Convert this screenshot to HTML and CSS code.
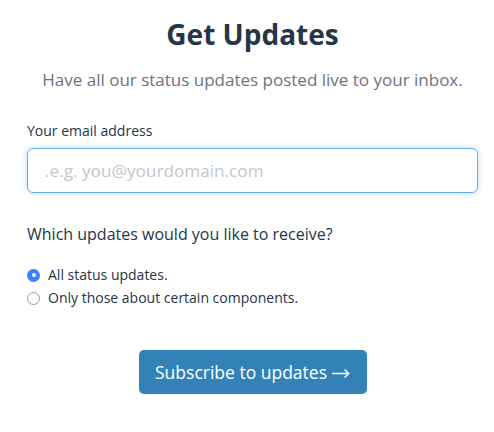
FILE: index.html
```html
<!DOCTYPE html>
<html>
<head>
<meta charset="utf-8">
<link rel="stylesheet" href="styles.css">
</head>
<body>
<div class="wrap">
  <h1 class="title">Get Updates</h1>
  <p class="sub">Have all our status updates posted live to your inbox.</p>
  <label class="label" for="email">Your email address</label>
  <div class="input"><span class="ph">.e.g. you@yourdomain.com</span></div>
  <p class="question">Which updates would you like to receive?</p>
  <div class="opts">
    <div class="opt"><span class="radio on"></span><span>All status updates.</span></div>
    <div class="opt"><span class="radio"></span><span>Only those about certain components.</span></div>
  </div>
  <div class="actions"><button class="btn"><span>Subscribe to updates</span><svg class="arrow" width="18" height="10" viewBox="0 0 18 10"><path d="M0 5.5H16.5M12.5 1.5L16.8 5.5L12.5 9.5" fill="none" stroke="#fff" stroke-width="1.4"/></svg></button></div>
</div>
</body>
</html>
```
FILE: styles.css
```css
* { box-sizing: border-box; }
html, body { margin: 0; background: #fff; }
body { font-family: "Open Sans", sans-serif; color: #293d50; }
.wrap { width: 451px; margin-left: 27px; padding-top: 14px; }
.title { margin: 0; text-align: center; font-size: 28px; font-weight: 700; line-height: 40px; color: #253647; }
.sub { margin: 13px 0 0; text-align: center; font-size: 17px; line-height: 26px; color: #6d747b; font-weight: 400; }
.label { display: block; margin-top: 28px; font-size: 14px; line-height: 20px; color: #253647; }
.input { margin-top: 7px; height: 45px; border: 1px solid #68aeea; border-radius: 6px; box-shadow: 0 0 6px rgba(102,175,233,0.45); display: flex; align-items: center; padding-left: 17px; }
.ph { font-size: 17.2px; color: #c4c7ca; }
.question { margin: 29px 0 0; font-size: 16px; line-height: 24px; color: #253647; }
.opts { margin-top: 19px; display: flex; flex-direction: column; gap: 3px; }
.opt { display: flex; align-items: center; gap: 8px; font-size: 14px; line-height: 20px; color: #253647; }
.radio { width: 13px; height: 13px; border-radius: 50%; border: 1px solid #9a9a9a; background: #fff; display: inline-block; flex: none; }
.radio.on { border: none; background: #3b82f6; position: relative; }
.radio.on::after { content: ""; position: absolute; left: 4.5px; top: 4.5px; width: 4px; height: 4px; border-radius: 50%; background: #fff; }
.actions { display: flex; justify-content: center; margin-top: 42px; }
.btn { width: 228px; height: 44px; border: none; border-radius: 5px; background: #3382b7; color: #fff; font-family: "Open Sans", sans-serif; font-size: 17.5px; padding: 0; display: flex; align-items: center; justify-content: center; gap: 5px; }
.arrow { display: block; margin-top: 2px; }
```
